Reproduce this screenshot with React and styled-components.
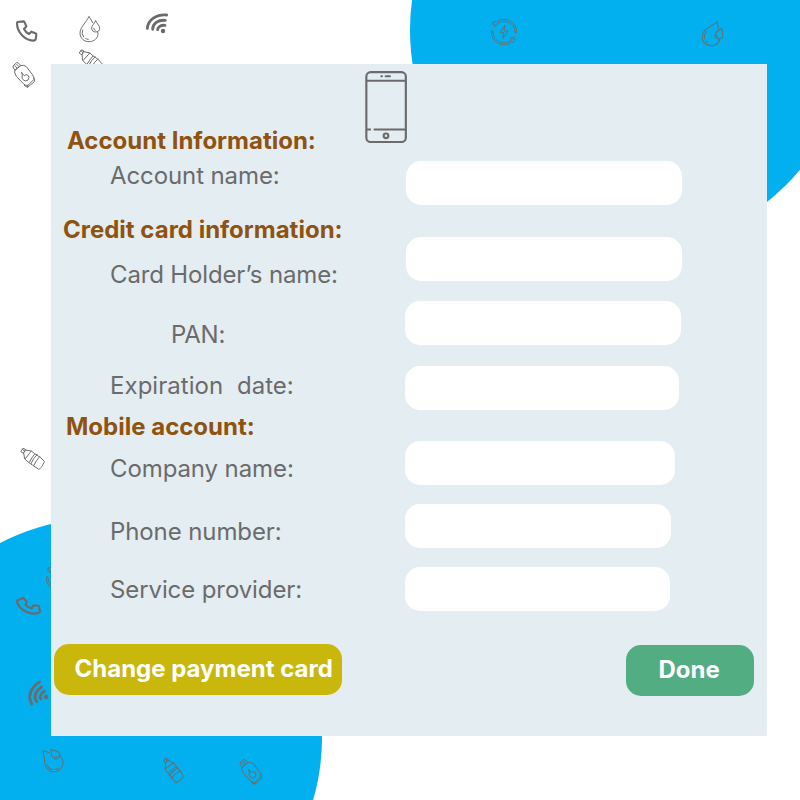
import React from "react";
import styled, { createGlobalStyle } from "styled-components";

const GlobalStyle = createGlobalStyle`
  * { box-sizing: border-box; }
  body { margin: 0; background: #ffffff; font-family: Inter, "Liberation Sans", sans-serif; }
`;

const Page = styled.main`
  position: relative;
  width: 800px;
  height: 800px;
  padding: 64px 33px 64px 51px;
  overflow: hidden;
  background: #ffffff;
`;

const Blob = styled.div`
  position: absolute;
  left: ${(p) => p.$x}px;
  top: ${(p) => p.$y}px;
  width: 440px;
  height: 440px;
  border-radius: 50%;
  background: #02b0f0;
`;

/* Decorative doodle, placed by its centre on the backdrop */
const Doodle = styled.svg`
  position: absolute;
  left: ${(p) => p.$x - 15}px;
  top: ${(p) => p.$y - 15}px;
  width: 30px;
  height: 30px;
  overflow: visible;
  transform: rotate(${(p) => p.$turn || 0}deg);
  fill: none;
  stroke: #6b6b6b;
  stroke-width: ${(p) => p.$weight || 2.9};
  stroke-linejoin: round;
  stroke-linecap: round;
`;

const Card = styled.form`
  position: relative;
  display: flex;
  flex-direction: column;
  width: 716px;
  height: 672px;
  background: #e4edf2;
`;

const Header = styled.header`
  display: flex;
  height: 62px;
  padding: 6px 0 0 313px;
`;

const DeviceIcon = styled.svg`
  flex: none;
  width: 44px;
  height: 74px;
  fill: none;
  stroke: #6b6b6b;
`;

const Heading = styled.h2`
  height: ${(p) => p.$height || 29}px;
  margin: 0 0 ${(p) => p.$after || 0}px ${(p) => p.$indent}px;
  color: #8f5310;
  font-size: 24px;
  font-weight: 700;
  line-height: 29px;
  white-space: nowrap;
`;

const Row = styled.div`
  display: flex;
  align-items: flex-start;
  height: 44px;
  margin-bottom: ${(p) => p.$after}px;
`;

const Label = styled.label`
  flex: none;
  width: ${(p) => p.$width || 354}px;
  padding: ${(p) => p.$drop || 0}px 0 0 ${(p) => p.$indent || 59}px;
  color: #6b6b6b;
  font-size: 24px;
  line-height: 29px;
  letter-spacing: ${(p) => p.$track}px;
  white-space: pre;
`;

const Field = styled.input`
  width: ${(p) => p.$width}px;
  height: 44px;
  padding: 0 14px;
  border: 0;
  border-radius: 15px;
  background: #ffffff;
  color: #6b6b6b;
  font: 400 20px Inter, sans-serif;
  outline: none;
`;

const Actions = styled.footer`
  display: flex;
  align-items: flex-start;
  justify-content: space-between;
  padding: 0 13px 0 3px;
`;

const Button = styled.button`
  width: ${(p) => p.$width}px;
  height: 51px;
  margin-top: ${(p) => p.$drop || 0}px;
  padding: 0 0 2px ${(p) => p.$inset}px;
  border: 0;
  border-radius: 15px;
  background: ${(p) => p.$color};
  color: #ffffff;
  font: 700 24px/29px Inter, sans-serif;
  text-align: left;
  white-space: nowrap;
`;

const Handset = (p) => (
  <Doodle viewBox="35 46 90 90" $weight={6.4} {...p}>
    <path d="M52 64 L70 62 Q72 62 73 65 L78 77 L71 85 Q76 95 86 100 L93 93 L105 98 Q108 99 108 102 L106 116 Q105 120 101 120 C75 120 50 96 50 68 Q50 65 52 64Z" />
  </Doodle>
);

const Drops = (p) => (
  <Doodle viewBox="221 54 90 90" {...p}>
    <path d="M277 68 L266 49 C258 67 239 82 239 99 C239 115 251 125 266 125 C281 125 293 115 293 101 L292 95" />
    <path d="M286 63 C281 72 274 77 274 85 C274 92 279 96 286 96 C293 96 298 92 298 85 C298 77 291 72 286 63Z" />
    <path d="M247 90 Q242 102 250 111 M256 116 Q259 118 264 118 M280 85 Q280 90 285 91" />
  </Doodle>
);

const Wifi = (p) => (
  <Doodle viewBox="444 49 90 90" $weight={8.6} {...p}>
    <circle cx="489" cy="94" r="6.8" fill="#6b6b6b" stroke="none" />
    <path d="M442 86 C444 60 469 44 500 46 M458 89 C458 72 474 60 496 62 M473 90 C473 82 482 76 495 77" />
  </Doodle>
);

const Canister = (p) => (
  <Doodle viewBox="27 180 90 90" {...p}>
    <path d="M40 204 L39 198 L50 188 L54 188 L62 196 L47 209Z M45 197 L50 203 M50 193 L56 199" />
    <path d="M47 209 L62 197 Q72 193 80 201 L98 225 Q102 231 102 238 L84 256 Q77 257 72 253 L49 229 Q42 219 44 210Z" />
    <path d="M102 234 L104 244 L83 262 L73 256 M84 256 L82 261" />
    <path d="M65 218 L67 225 Q63 236 71 241 Q78 245 84 240 Q90 232 84 226 Q77 221 74 227 Q70 225 65 218Z" />
  </Doodle>
);

const Bottle = (p) => (
  <Doodle viewBox="54 42 90 90" {...p}>
    <path d="M63 64 L69 55 L76 58 L71 69Z M67 57 L74 64 M76 60 L94 63 L104 71 Q107 75 111 74 Q114 80 119 80 L133 94 Q133 98 129 103 Q128 109 123 112 L118 118 Q115 119 111 114 L99 107 Q98 103 93 103 Q90 99 86 97 L74 87 L71 69" />
    <path d="M94 63 L76 86 M104 72 Q94 84 88 97 M111 74 Q99 85 93 101 M119 80 Q108 91 101 107" />
  </Doodle>
);

const Energy = (p) => (
  <Doodle viewBox="27 51 90 90" $weight={2.7} {...p}>
    <path d="M53 63 A38 38 0 0 1 110 98 L105 98 A33 33 0 0 0 56 68" />
    <path d="M34 94 A38 38 0 0 0 91 129 L88 124 A33 33 0 0 1 39 94Z" />
    <path d="M74 76 L60 98 L71 98 L69 115 L84 93 L73 93Z" />
    <path d="M40 67 L48 77 Q54 74 53 68 Q51 63 45 64Z M40 67 L37 70 M48 77 L44 79 M37 71 L43 79" />
    <path d="M96 113 L105 122 Q101 128 95 126 Q90 122 92 116Z M99 114 L103 109 M104 119 L108 115" />
  </Doodle>
);

const Device = () => (
  <DeviceIcon viewBox="42 29.5 132 222" aria-hidden="true">
    <rect x="49" y="36" width="118.5" height="209.5" rx="13" strokeWidth="6.5" />
    <path d="M50 62H167 M50 208H63 M71 208H167" strokeWidth="6" />
    <path d="M94 48.5H96 M107 48.5H120" strokeWidth="6" strokeLinecap="round" />
    <circle cx="108" cy="227" r="7" strokeWidth="6.5" />
  </DeviceIcon>
);

function Entry({ id, text, width, labelWidth, drop, indent, after, track = -0.1 }) {
  return (
    <Row $after={after}>
      <Label htmlFor={id} $drop={drop} $indent={indent} $width={labelWidth} $track={track}>{text}</Label>
      <Field id={id} $width={width} />
    </Row>
  );
}

export default function App() {
  return (
    <>
      <GlobalStyle />
      <Page>
        <Blob $x={410} $y={-190.5} />
        <Blob $x={-118} $y={518} />

        <Handset $x={26.5} $y={30.5} />
        <Drops $x={89} $y={33} />
        <Wifi $x={163} $y={31.3} />
        <Canister $x={24} $y={75} />
        <Bottle $x={90.5} $y={61.3} $turn={3} />
        <Energy $x={504} $y={32} />
        <Drops $x={711} $y={36.5} $turn={22} />
        <Bottle $x={33} $y={459} />
        <Energy $x={58.7} $y={577.7} />
        <Handset $x={29.3} $y={606.3} $turn={-19} />
        <Wifi $x={46} $y={697.3} $turn={-36} />
        <Drops $x={53.7} $y={763} $turn={-42} />
        <Bottle $x={173} $y={770.7} $turn={16} />
        <Canister $x={251} $y={772} />

        <Card onSubmit={(e) => e.preventDefault()}>
          <Header><Device /></Header>
          <Heading $indent={16} $after={6}>Account Information:</Heading>
          <Entry id="account" text="Account name:" width={276} labelWidth={355} after={10} />
          <Heading $indent={12} $height={22}>Credit card information:</Heading>
          <Entry id="holder" text="Card Holder’s name:" width={276} labelWidth={355} drop={23} after={20} track={-0.15} />
          <Entry id="pan" text="PAN:" width={276} drop={19} indent={120} after={21} track={-0.25} />
          <Entry id="expiry" text="Expiration  date:" width={274} drop={5} after={2} track={0.05} />
          <Heading $indent={15}>Mobile account:</Heading>
          <Entry id="company" text="Company name:" width={270} drop={13} after={19} />
          <Entry id="phone" text="Phone number:" width={266} drop={13} after={19} />
          <Entry id="provider" text="Service provider:" width={265} drop={8} after={33} />
          <Actions>
            <Button type="button" $width={288} $inset={20.5} $color="#cab70b">Change payment card</Button>
            <Button type="submit" $width={128} $inset={32.5} $drop={1} $color="#52ad82">Done</Button>
          </Actions>
        </Card>
      </Page>
    </>
  );
}
